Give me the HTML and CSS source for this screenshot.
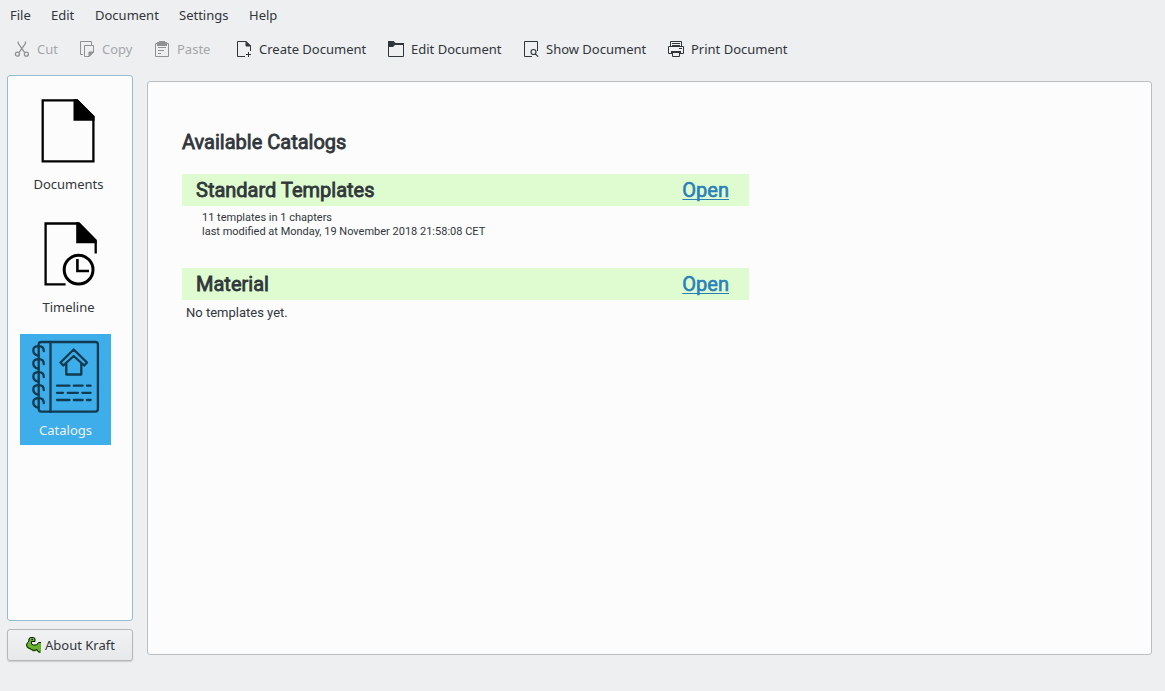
FILE: index.html
```
<!DOCTYPE html>
<html lang="en">
<head>
<meta charset="utf-8">
<title>Kraft</title>
<link rel="stylesheet" href="styles.css">
</head>
<body>
<nav class="menubar">
  <span>File</span><span>Edit</span><span>Document</span><span>Settings</span><span>Help</span>
</nav>
<div class="toolbar">
  <div class="tool disabled">
    <svg viewBox="0 0 16 16" fill="none" stroke="currentColor" stroke-width="1.300"><path d="M4.200.5v1.800l6.300 9M11.500.5v1.800l-6.300 9"/><circle cx="3.400" cy="13.200" r="2"/><circle cx="12.400" cy="13.200" r="2"/></svg>
    <span>Cut</span>
  </div>
  <div class="tool disabled">
    <svg viewBox="0 0 16 16" fill="none" stroke="currentColor"><path d="M4 13.500H1.500V.500h11V4M5.500 4.500h9V11L10 15.500H5.500z"/><path d="M10 15.500V11h4.500z" fill="currentColor"/></svg>
    <span>Copy</span>
  </div>
  <div class="tool disabled">
    <svg viewBox="0 0 16 16" fill="none" stroke="currentColor"><path d="M3 2.500H1.500v13h13v-13H13M4 6.500h8M4 9.500h6M4 12.500h3"/><path d="M3 1h2V0h6v1h2v4H3z" fill="currentColor" stroke="none"/></svg>
    <span>Paste</span>
  </div>
  <div class="tool">
    <svg viewBox="0 0 16 16" fill="none" stroke="currentColor"><path d="M9 15.500H1.500V.500H10L14.500 5v5M12.500 11v5M10 13.500h5"/><path d="M10 .5V5h4.500z" fill="currentColor"/></svg>
    <span>Create Document</span>
  </div>
  <div class="tool">
    <svg viewBox="0 0 16 16" fill="none" stroke="currentColor"><path d="M.5 2.500h15v13H.5z"/><path d="M0 0h5.500l2 2H16v2H7L5 6H0z" fill="currentColor" stroke="none"/></svg>
    <span>Edit Document</span>
  </div>
  <div class="tool">
    <svg viewBox="0 0 16 16" fill="none" stroke="currentColor"><path d="M9 15.500H1.500V.500h13V10"/><g stroke-width="1.150"><path d="M12.300 12.800l2.900 2.900"/><circle cx="10.500" cy="11" r="2.500"/></g></svg>
    <span>Show Document</span>
  </div>
  <div class="tool">
    <svg viewBox="0 0 16 16" fill="none" stroke="currentColor"><path d="M2.500 5V.500h11V5M4 2.500h8M4 4.500h8M3 12.500H.5v-7h15v7H13M11 7.500h3M4.500 11v4.500h7V11"/><path d="M3 10h10v3h-1v-1H4v1H3z" fill="currentColor" stroke="none"/></svg>
    <span>Print Document</span>
  </div>
</div>
<main class="workspace">
  <aside class="side">
    <div class="views">
      <div class="view documents">
        <svg width="72" height="72" viewBox="0 0 72 72" fill="none" stroke="#000" stroke-width="2.300"><path d="M9.700 5.300h34.500L60.400 21.600v44.800H9.700z"/><path d="M40.500 4.200h3.800L61.500 21.200v4.600H40.500z" fill="#000" stroke="none"/></svg>
        <span>Documents</span>
      </div>
      <div class="view timeline">
        <svg width="72" height="72" viewBox="0 0 72 72" fill="none" stroke="#000" stroke-width="2.300"><path d="M32.600 66.400H12.600V5.500h33M62.700 24v11.500"/><path d="M43.200 4.300h3.300L63.900 22v3.300H43.200z" fill="#000" stroke="none"/><circle cx="45.600" cy="51.700" r="14.400" stroke-width="3"/><path d="M44.400 41v12H56" stroke-width="2.600"/></svg>
        <span>Timeline</span>
      </div>
      <div class="view catalogs">
        <svg width="72" height="76" viewBox="0 0 72 76" fill="none" stroke="#123a50" stroke-width="2.300" stroke-linecap="round" stroke-linejoin="round">
          <rect x="8.700" y="5" width="59.200" height="69.600" rx="2.500"/><path d="M20.500 5v70"/>
          <path d="M13.800 18.200c0-3-1.900-5-4.800-5s-5.700 1-5.700 4 1.900 4.800 4.900 5.400M13.800 31.200c0-3-1.900-5-4.800-5s-5.700 1-5.700 4 1.900 4.800 4.900 5.400M13.800 44.200c0-3-1.900-5-4.800-5s-5.700 1-5.700 4 1.900 4.800 4.900 5.400M13.800 57.200c0-3-1.900-5-4.800-5s-5.700 1-5.700 4 1.900 4.800 4.900 5.400M13.800 70.200c0-3-1.900-5-4.800-5s-5.700 1-5.700 4 1.900 4.800 4.900 5.400" transform="translate(0 -4)"/>
          <path d="M43.700 12.500L30.500 25.500l2.800 3L43.700 19l10.500 9.500 2.800-3zM36.300 27v10.500h15V27"/>
          <path d="M27 48.700h12.500M43.800 48.700h8.800M57 48.700h3.600M27 55.800h6M37.700 55.800h10.200M52.300 55.800h8.300M27 63h12.500M43.800 63h8.800M57 63h3.600"/>
        </svg>
        <span>Catalogs</span>
      </div>
    </div>
    <button class="about">
      <svg width="16" height="16" viewBox="0 0 16 16"><path d="M4 1.500L5.500.5h3l1.500 1v3H7L6.500 6l1 2H11l2-2 3-.5V16h-2l-2-2-4 .5-3-2-3-1.500-1-3 2-3z" fill="#65b32e"/><path d="M16 5.500h-2.500L11.500 8H8.500L6.500 7V4.500H10V1.500L8.500.5h-3L4 1.500V4L2.500 5.500 1.500 8l1 2.500 2.500 1 1.500 1 2.500 1L12 12.500l1.500 2.500H15M6.500 2.500H8" fill="none" stroke="#0b1406"/></svg>
      <span>About Kraft</span>
    </button>
  </aside>
  <section class="content">
    <h1>Available Catalogs</h1>
    <article class="catalog standard">
      <header><h2>Standard Templates</h2><a href="#">Open</a></header>
      <p class="details">11 templates in 1 chapters<br>last modified at Monday, 19 November 2018 21:58:08 CET</p>
    </article>
    <article class="catalog">
      <header><h2>Material</h2><a href="#">Open</a></header>
      <p class="empty">No templates yet.</p>
    </article>
  </section>
</main>
</body>
</html>
```
FILE: styles.css
```
* { box-sizing: border-box; }
body {
  margin: 0;
  width: 1165px;
  height: 691px;
  overflow: hidden;
  background: #eeeff1;
  color: #31363b;
  font: 13px/18px "Noto Sans", sans-serif;
}
.menubar {
  display: grid;
  grid-template-columns: 41px 44px 84px 70px 40px;
  height: 30px;
  padding: 6px 0 0 10px;
}
.toolbar {
  display: grid;
  grid-template-columns: 65px 75px 82px 152px 135px 145px 130px;
  align-items: center;
  height: 38px;
  padding-left: 14px;
  white-space: nowrap;
}
.tool { display: flex; align-items: center; gap: 7px; }
.tool svg { width: 16px; height: 16px; flex: none; }
.disabled { color: #a5a7a9; }
.disabled svg { color: #8f9193; }
.workspace { display: flex; gap: 14px; padding: 7px 0 0 7px; }
.side { display: flex; flex-direction: column; gap: 8px; width: 126px; }
.views {
  height: 546px;
  padding-top: 12px;
  border: 1px solid #94bdd3;
  border-radius: 3px;
  background: #fcfcfc;
}
.view { display: flex; flex-direction: column; align-items: center; }
.view svg { display: block; }
.documents, .timeline { height: 123px; padding-top: 7px; margin-right: 3px; }
.documents span, .timeline span { margin-top: 8px; }
.catalogs {
  width: 91px;
  height: 111px;
  margin-left: 12px;
  padding-top: 3px;
  background: #3daee9;
  color: #eff0f1;
}
.catalogs span { margin-top: 8px; }
.about {
  display: flex;
  align-items: center;
  justify-content: center;
  gap: 4px;
  height: 32px;
  padding: 0;
  border: 1px solid #b5b7b9;
  border-radius: 3px;
  background: linear-gradient(#f1f2f3, #e7e8e9);
  box-shadow: 0 1px 1px #cbcccd;
  color: inherit;
  font: inherit;
}
.content {
  width: 1005px;
  height: 574px;
  margin-top: 6px;
  padding: 46px 34px 0;
  border: 1px solid #bcbebf;
  border-radius: 3px;
  background: #fcfcfc;
  font-family: Roboto, sans-serif;
}
h1, h2 {
  margin: 0;
  font-size: 20px;
  line-height: 28px;
  font-weight: 400;
  -webkit-text-stroke: 0.8px;
}
.catalog { width: 567px; height: 94px; }
.standard { margin-top: 18px; }
.catalog header {
  display: flex;
  align-items: center;
  justify-content: space-between;
  height: 32px;
  padding: 0 20px 0 14px;
  background: #dffcd1;
}
.catalog a {
  color: #2980b9;
  font-size: 20px;
  -webkit-text-stroke: 0.6px;
  text-decoration: underline 1px;
  text-underline-offset: 2px;
  text-decoration-skip-ink: none;
}
.details { margin: 5px 0 0 20px; font-size: 11px; line-height: 14px; }
.empty { margin: 4px 0 0 4px; }
```
